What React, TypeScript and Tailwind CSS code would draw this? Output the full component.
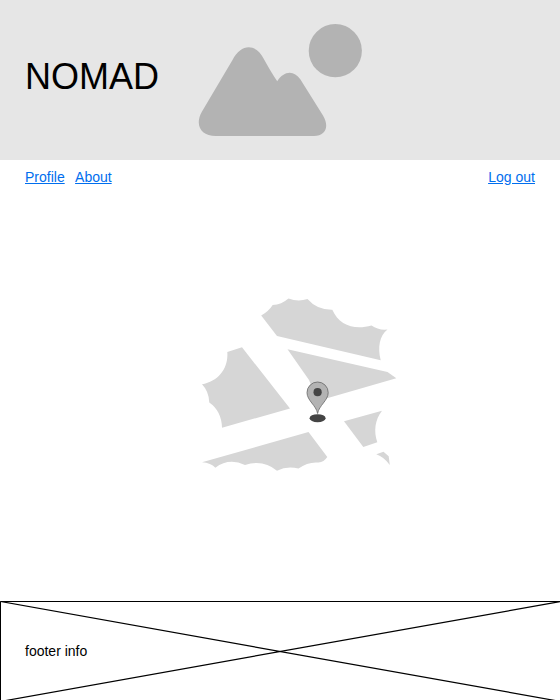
function Landscape() {
  return (
    <svg className="block h-[160px] w-[180px]" viewBox="190 0 180 160" fill="#b3b3b3" aria-hidden="true">
      <circle cx="335.3" cy="50.700" r="26.600" />
      <path d="M232.500 60C241 43.200 256 43.200 263.700 58.700C268.200 66.700 272.600 74.500 277.200 81.300C284 70.300 294 70 300.300 79.200L323 115.500C329.700 126.500 325.500 136 314 136H216C200.500 136 194.500 124.500 202 111.500Z" />
    </svg>
  );
}

function MapPlaceholder() {
  return (
    <svg className="block h-[180px] w-[200px]" viewBox="200 294 200 180" aria-hidden="true">
      <g fill="#d6d6d6">
        <path d="M261.200 315.500Q268.500 311.500 272.700 305Q281.500 304.500 288.500 298.500Q298 302 307.500 299Q317 310 332.300 309.700C339 325 354 330.500 371.500 325.500Q378.500 330.500 387.500 329.500C379.500 335.500 377.500 347 380.700 360.300L277 336Z" />
        <path d="M287.500 349.300L387.500 372L396.300 378.200L317.500 401L309 380Z" />
        <path d="M227.300 352L242 347.300L290 408.500L222 427.700Q221.500 411 209.300 402.500Q209 391.500 202 384.200C218.500 381 228.500 368.500 227.300 352Z" />
        <path d="M202 462.300L308.500 432L327.300 457Q324 462 318.500 462.500Q308 461.500 298.500 468.500Q287 465.500 277 470.700Q263 459 245 465Q229 457.500 215.300 467.700Q211 463 202 462.300Z" />
        <path d="M344 421.300L382 410.700C375 419.500 373.500 431 377.300 442.300L363.300 447Z" />
        <path d="M376.300 454.300L383.500 451.800L388.700 456.300L389.800 465Q384 457 376.300 454.300Z" />
      </g>
      <ellipse cx="317.600" cy="418.200" rx="8" ry="4" fill="#444" />
      <path d="M317.600 413.500C316.300 405.500 307 400.500 307 392.600A10.600 10.600 0 0 1 328.200 392.600C328.200 400.500 318.900 405.500 317.600 413.500Z" fill="#b3b3b3" stroke="#666" strokeWidth=".8" />
      <circle cx="317.600" cy="392.200" r="4.100" fill="#444" />
    </svg>
  );
}

export default function App() {
  return (
    <div className="flex h-[700px] w-[560px] flex-col overflow-hidden bg-white font-['Liberation_Sans',Arial,sans-serif] text-sm text-black">
      <header className="flex h-[160px] shrink-0 items-center bg-[#e6e6e6] pl-[25px]">
        <h1 className="w-[165px] pb-[7px] text-4xl">NOMAD</h1>
        <Landscape />
      </header>
      <nav className="flex h-[34px] shrink-0 items-center justify-between px-[25px] text-[#006eee] underline">
        <div className="flex gap-[10.4px]">
          <a href="#profile">Profile</a>
          <a href="#about">About</a>
        </div>
        <a href="#logout">Log out</a>
      </nav>
      <main className="h-[407px] shrink-0 pt-[100px] pl-[200px]">
        <MapPlaceholder />
      </main>
      <footer className="relative flex h-[99px] shrink-0 items-center pl-[25px]">
        <svg className="absolute inset-0 h-[99px] w-[560px]" viewBox="0 601 560 99" fill="none" stroke="#000" aria-hidden="true">
          <path d="M.5 701.500V601.500H560.500V701.500" />
          <path d="M.5 601.500L560.500 701.500M560.500 601.500L.5 701.500" strokeWidth="1.200" />
        </svg>
        <p>footer info</p>
      </footer>
    </div>
  );
}
